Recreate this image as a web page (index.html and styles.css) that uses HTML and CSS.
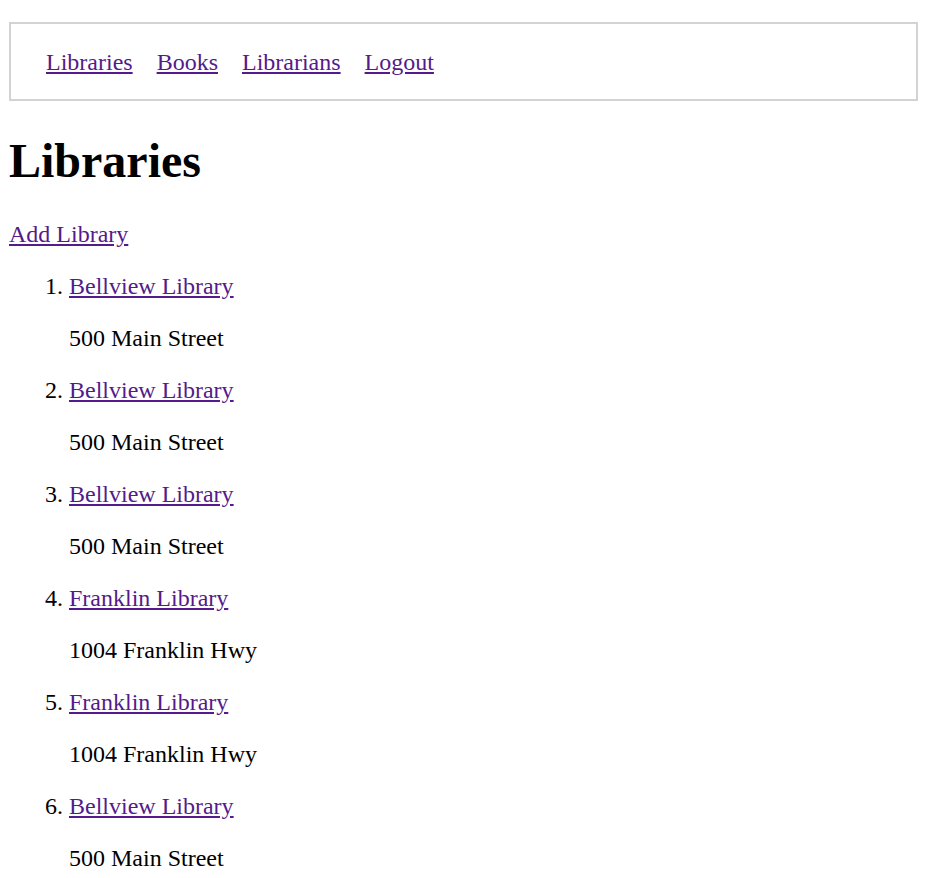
FILE: index.html
```html
<!DOCTYPE html>
<html>
<head>
<meta charset="utf-8">
<title>Libraries</title>
<link rel="stylesheet" href="styles.css">
</head>
<body>
<nav class="nav">
  <a href="#">Libraries</a>
  <a href="#">Books</a>
  <a href="#">Librarians</a>
  <a href="#">Logout</a>
</nav>
<h1 class="title">Libraries</h1>
<p class="add"><a href="#">Add Library</a></p>
<ol class="list">
  <li><a href="#">Bellview Library</a><p class="addr">500 Main Street</p></li>
  <li><a href="#">Bellview Library</a><p class="addr">500 Main Street</p></li>
  <li><a href="#">Bellview Library</a><p class="addr">500 Main Street</p></li>
  <li><a href="#">Franklin Library</a><p class="addr">1004 Franklin Hwy</p></li>
  <li><a href="#">Franklin Library</a><p class="addr">1004 Franklin Hwy</p></li>
  <li><a href="#">Bellview Library</a><p class="addr">500 Main Street</p></li>
</ol>
</body>
</html>
```
FILE: styles.css
```css
body {
  margin: 9px;
  font-family: "Liberation Serif", "Times New Roman", serif;
  font-size: 24px;
  line-height: 28px;
  color: #000;
  background: #fff;
}
a {
  color: #551a8b;
  text-decoration: underline;
}
.nav {
  margin-top: 13px;
  border: 2px solid #d3d3d3;
  padding: 24px 35px 23px;
  display: flex;
  gap: 24px;
}
.title {
  font-size: 48px;
  line-height: 55px;
  font-weight: bold;
  margin: 32px 0;
}
.add {
  margin: 24px 0;
}
.list {
  margin: 24px 0;
  padding-left: 60px;
}
.addr {
  margin: 24px 0;
}
```
